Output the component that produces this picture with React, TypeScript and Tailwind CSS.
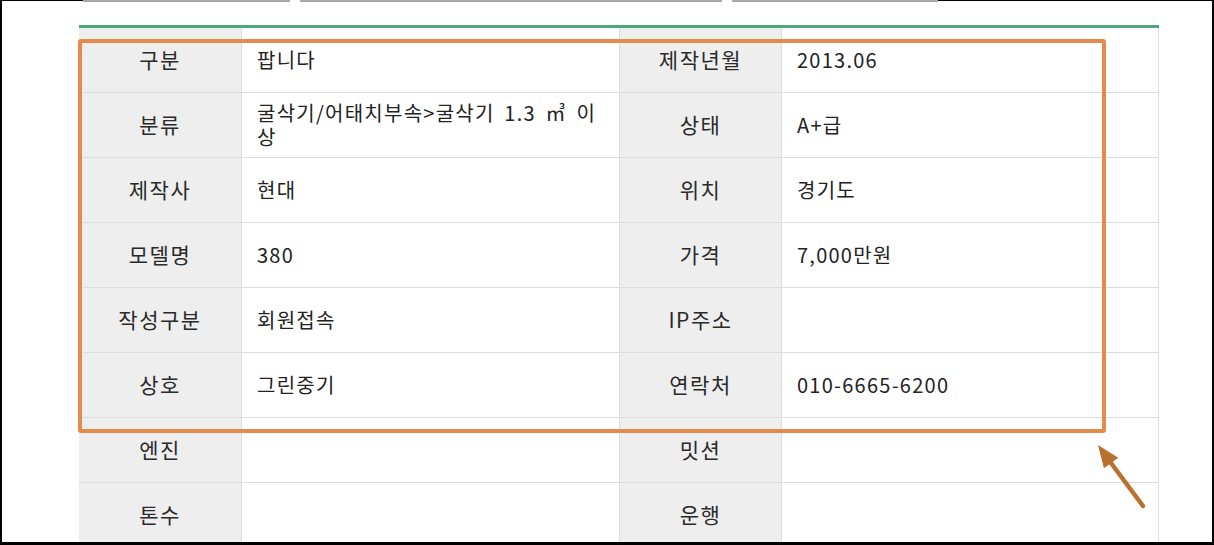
import React from "react";

const rows: [string, string, string, string][] = [
  ["구분", "팝니다", "제작년월", "2013.06"],
  ["분류", "굴삭기/어태치부속>굴삭기 1.3 ㎥ 이상", "상태", "A+급"],
  ["제작사", "현대", "위치", "경기도"],
  ["모델명", "380", "가격", "7,000만원"],
  ["작성구분", "회원접속", "IP주소", ""],
  ["상호", "그린중기", "연락처", "010-6665-6200"],
  ["엔진", "", "밋션", ""],
  ["톤수", "", "운행", ""],
];

const Label = ({ children }: { children: React.ReactNode }) => (
  <div className="flex h-[65px] items-center justify-center border-b border-r border-[#dcdcdc] bg-[#eeeeee] text-[21px] tracking-[1.5px] text-[#2a2a2a]">
    {children}
  </div>
);

const Value = ({ children }: { children: React.ReactNode }) => (
  <div className="flex h-[65px] items-center border-b border-r border-[#dcdcdc] bg-white pl-[15px] pr-[15px] text-[20px] leading-[24px] tracking-[1.25px] text-[#222] [word-spacing:4px]">
    <span>{children}</span>
  </div>
);

export default function App() {
  return (
    <div className="relative h-[545px] w-[1214px] overflow-hidden border-b-[3px] border-l-2 border-r-2 border-black bg-white [font-family:'Noto_Sans_CJK_KR',sans-serif]">
      {/* top edge of the captured page */}
      <div className="flex h-[2px] items-start">
        <div className="h-px w-[81px] bg-black" />
        <div className="h-[2px] w-[207px] bg-[#a8a8a8]" />
        <div className="w-[10px]" />
        <div className="h-[2px] w-[422px] bg-[#a8a8a8]" />
        <div className="w-[10px]" />
        <div className="h-[2px] w-[206px] bg-[#a8a8a8]" />
        <div className="h-px flex-1 bg-black" />
      </div>

      {/* spec table */}
      <div className="ml-[77px] mt-[23px] w-[1080px] border-t-[3px] border-[#4ca87c]">
        <div className="grid grid-cols-[163px_378px_162px_377px]">
          {rows.map(([l1, v1, l2, v2]) => (
            <React.Fragment key={l1}>
              <Label>{l1}</Label>
              <Value>{v1}</Value>
              <Label>{l2}</Label>
              <Value>{v2}</Value>
            </React.Fragment>
          ))}
        </div>
      </div>

      {/* annotation box */}
      <div className="absolute left-[76px] top-[39px] h-[394px] w-[1028px] rounded-[3px] border-4 border-[#e48b4c]" />

      {/* annotation arrow */}
      <svg
        className="absolute left-[1088px] top-[440px]"
        width="60"
        height="75"
        viewBox="0 0 60 75"
      >
        <line x1="21" y1="23" x2="53" y2="66" stroke="#b8712f" strokeWidth="4.5" strokeLinecap="round" />
        <polygon points="8,5 28.3,17.7 13.9,28.3" fill="#b8712f" />
      </svg>
    </div>
  );
}
